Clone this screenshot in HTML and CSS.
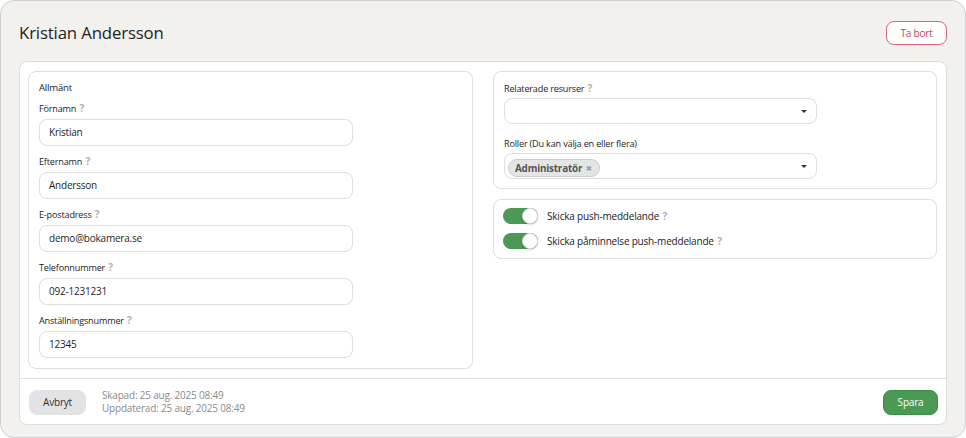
FILE: index.html
```html
<!DOCTYPE html>
<html lang="sv">
<head>
<meta charset="utf-8">
<title>Kristian Andersson</title>
<link rel="stylesheet" href="styles.css">
</head>
<body>
<div class="modal">
  <div class="modal-header">
    <h1 class="title">Kristian Andersson</h1>
    <button class="btn btn-danger-outline">Ta bort</button>
  </div>
  <div class="card">
    <div class="card-body">
      <section class="box box-general">
        <div class="box-title">Allmänt</div>
        <div class="field">
          <label class="label">Förnamn <span class="help">?</span></label>
          <div class="input">Kristian</div>
        </div>
        <div class="field">
          <label class="label">Efternamn <span class="help">?</span></label>
          <div class="input">Andersson</div>
        </div>
        <div class="field">
          <label class="label">E-postadress <span class="help">?</span></label>
          <div class="input">demo@bokamera.se</div>
        </div>
        <div class="field">
          <label class="label">Telefonnummer <span class="help">?</span></label>
          <div class="input">092-1231231</div>
        </div>
        <div class="field">
          <label class="label">Anställningsnummer <span class="help">?</span></label>
          <div class="input">12345</div>
        </div>
      </section>
      <div class="col-right">
        <section class="box box-selects">
          <div class="field">
            <label class="label">Relaterade resurser <span class="help">?</span></label>
            <div class="select"><span class="select-value"></span><span class="caret"></span></div>
          </div>
          <div class="field field-roles">
            <label class="label">Roller (Du kan välja en eller flera)</label>
            <div class="select select-multi">
              <span class="select-value"><span class="tag">Administratör <span class="tag-x">✖</span></span></span>
              <span class="caret"></span>
            </div>
          </div>
        </section>
        <section class="box box-toggles">
          <div class="toggle-row">
            <span class="toggle on"><span class="knob"></span></span>
            <span class="toggle-label">Skicka push-meddelande <span class="help">?</span></span>
          </div>
          <div class="toggle-row">
            <span class="toggle on"><span class="knob"></span></span>
            <span class="toggle-label">Skicka påminnelse push-meddelande <span class="help">?</span></span>
          </div>
        </section>
      </div>
    </div>
    <div class="card-footer">
      <button class="btn btn-secondary">Avbryt</button>
      <div class="meta">
        <div>Skapad: 25 aug. 2025 08:49</div>
        <div>Uppdaterad: 25 aug. 2025 08:49</div>
      </div>
      <button class="btn btn-success">Spara</button>
    </div>
  </div>
</div>
</body>
</html>
```

FILE: styles.css
```css
* { box-sizing: border-box; }
html, body { margin: 0; padding: 0; background: #ffffff; }
body {
  font-family: "Open Sans", "Noto Sans", "Liberation Sans", sans-serif;
  color: #333333;
  width: 966px;
  height: 438px;
}
.modal {
  width: 966px;
  height: 438px;
  background: #f2f1ee;
  border: 1px solid #cfcfcf;
  border-radius: 14px;
  padding: 20px 18px 10px 18px;
}
.modal-header {
  display: flex;
  align-items: center;
  justify-content: space-between;
  height: 24px;
  margin-bottom: 16px;
}
.title {
  margin: 0;
  font-size: 16.8px;
  letter-spacing: -0.15px;
  font-weight: 400;
  color: #1e1e1e;
  line-height: 24px;
}
.btn {
  font-family: inherit;
  font-size: 10px;
  letter-spacing: -0.2px;
  border-radius: 8px;
  height: 25px;
  cursor: pointer;
  padding: 0;
  line-height: 1;
}
.btn-danger-outline {
  height: 24px;
  width: 61px;
  background: #ffffff;
  border: 1px solid #d9667a;
  color: #c9405a;
}
.card {
  background: #ffffff;
  border: 1px solid #dcdcdc;
  border-radius: 8px;
}
.card-body {
  display: grid;
  grid-template-columns: 445px 444px;
  column-gap: 20px;
  padding: 9px 9px 9px 8px;
  align-items: start;
}
.box {
  border: 1px solid #dedede;
  border-radius: 8px;
  background: #ffffff;
}
.box-general {
  padding: 8px 10px 10px 10px;
}
.box-title {
  font-size: 9.6px;
  letter-spacing: -0.2px;
  line-height: 16px;
  height: 16px;
  color: #222222;
}
.field { display: flex; flex-direction: column; }
.box-general .field { margin-top: 5px; }
.box-general .field + .field { margin-top: 8px; }
.label {
  display: block;
  font-size: 9.1px;
  letter-spacing: -0.18px;
  line-height: 16px;
  height: 16px;
  color: #222222;
}
.help {
  color: #b0b0b0;
  font-weight: 700;
  font-size: 10px;
  letter-spacing: 0;
  line-height: 1;
  margin-left: 1px;
}
.input {
  margin-top: 2px;
  width: 314px;
  height: 27px;
  border: 1px solid #dedede;
  border-radius: 8px;
  padding: 0 9px;
  font-size: 10px;
  letter-spacing: -0.22px;
  line-height: 25px;
  color: #1e1e1e;
}
.col-right {
  display: flex;
  flex-direction: column;
  gap: 10px;
}
.box-selects {
  padding: 9px 10px 9px 10px;
}
.field-roles { margin-top: 12px; }
.select {
  margin-top: 1px;
  width: 313px;
  height: 26px;
  border: 1px solid #dedede;
  border-radius: 8px;
  display: flex;
  align-items: center;
  justify-content: space-between;
  padding: 0 9px 0 3px;
}
.caret {
  width: 0;
  height: 0;
  border-left: 3px solid transparent;
  border-right: 3px solid transparent;
  border-top: 3px solid #333333;
  margin-top: 1px;
}
.tag {
  display: inline-flex;
  align-items: center;
  gap: 4px;
  height: 18px;
  padding: 0 7px 0 6px;
  background: #e5e5e5;
  border: 1px solid #cccccc;
  border-radius: 9px;
  font-size: 9.9px;
  letter-spacing: -0.2px;
  font-weight: 700;
  color: #555555;
}
.tag-x {
  font-size: 7px;
  color: #a0a0a0;
}
.box-toggles {
  padding: 7px 10px 8px 9px;
  display: flex;
  flex-direction: column;
  gap: 7px;
}
.toggle-row {
  display: flex;
  align-items: center;
  height: 18px;
  gap: 9px;
}
.toggle {
  position: relative;
  width: 35px;
  height: 16px;
  border-radius: 8px;
  background: #4a9a55;
  display: inline-block;
}
.knob {
  position: absolute;
  right: 0;
  top: 0;
  width: 16px;
  height: 16px;
  border-radius: 50%;
  background: #ffffff;
  border: 1px solid #e0e0e0;
  box-shadow: 0 1px 2px rgba(0,0,0,0.15);
}
.toggle-label {
  font-size: 10px;
  letter-spacing: -0.2px;
  line-height: 18px;
  color: #222222;
}
.card-footer {
  border-top: 1px solid #e2e2e2;
  padding: 10px 8px 9px 9px;
  display: flex;
  align-items: center;
}
.btn-secondary {
  width: 57px;
  background: #e3e3e5;
  border: 1px solid #e3e3e5;
  color: #333333;
}
.meta {
  margin-left: 16px;
  font-size: 10px;
  letter-spacing: -0.2px;
  line-height: 13px;
  color: #8a8a8a;
}
.btn-success {
  margin-left: auto;
  width: 55px;
  background: #4a9a55;
  border: 1px solid #3f8c4a;
  color: #ffffff;
}
```
